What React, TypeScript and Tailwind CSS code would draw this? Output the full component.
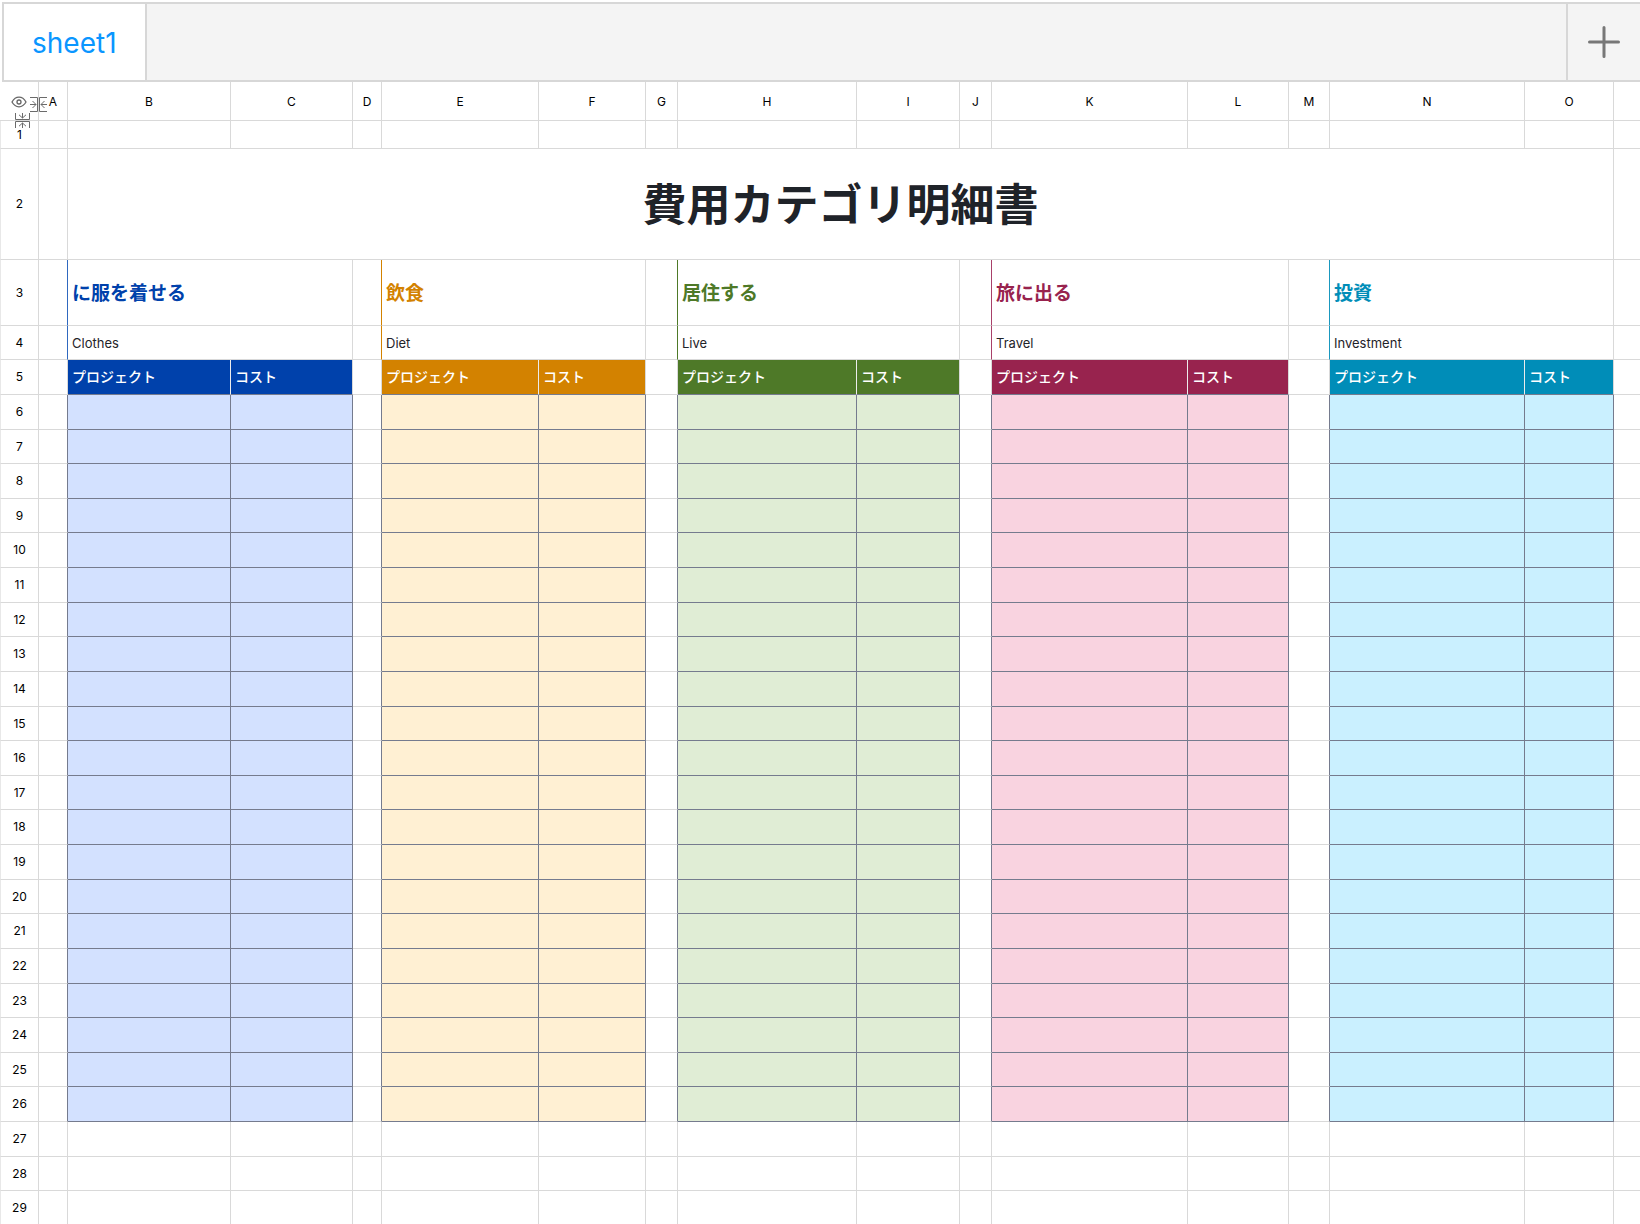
import { Fragment } from "react";

const SECTIONS = [
  {
    title: "に服を着せる",
    subtitle: "Clothes",
    text: "text-[#0041ab]",
    head: "bg-[#0041ab]",
    body: "bg-[#d3e1ff]",
    edge: "border-r-[#2f68bf]",
  },
  {
    title: "飲食",
    subtitle: "Diet",
    text: "text-[#d38200]",
    head: "bg-[#d38200]",
    body: "bg-[#fff0d3]",
    edge: "border-r-[#d38200]",
  },
  {
    title: "居住する",
    subtitle: "Live",
    text: "text-[#4e7928]",
    head: "bg-[#4e7928]",
    body: "bg-[#e0edd5]",
    edge: "border-r-[#4e7928]",
  },
  {
    title: "旅に出る",
    subtitle: "Travel",
    text: "text-[#98234e]",
    head: "bg-[#98234e]",
    body: "bg-[#f9d3e0]",
    edge: "border-r-[#a84069]",
  },
  {
    title: "投資",
    subtitle: "Investment",
    text: "text-[#008db8]",
    head: "bg-[#008db8]",
    body: "bg-[#caf0ff]",
    edge: "border-r-[#1a98bf]",
  },
];

// Row number gutter first, then A..O
const COL_WIDTHS = [39, 29, 163, 122, 29, 157, 107, 32, 179, 103, 32, 196, 101, 41, 195, 89];
const LETTERS = "ABCDEFGHIJKLMNO".split("");

const FIRST_BODY_ROW = 6;
const LAST_BODY_ROW = 26;
const LAST_ROW = 29;
const ROW_STEP = 34.62;

// Rows are a bit under 35px on average, so heights alternate between 34 and 35
function rowHeight(row: number) {
  const i = row - FIRST_BODY_ROW;
  return Math.round((i + 1) * ROW_STEP) - Math.round(i * ROW_STEP);
}

function range(from: number, to: number) {
  return Array.from({ length: to - from + 1 }, (_, i) => from + i);
}

const CELL = "border-r border-b border-[#d9d9d9] p-0";
const HEAD_CELL = "border-r border-b border-b-[#757b8e] bg-clip-padding p-0 pl-1 text-[14px] leading-5 font-medium text-white";

function RowNumber({ row }: { row: number }) {
  return (
    <th scope="row" className="border-x border-b border-[#d9d9d9] border-l-[#e8e8e8] p-0 text-center text-xs font-normal text-black">
      {row}
    </th>
  );
}

function EyeIcon() {
  return (
    <svg width="16" height="12" viewBox="0 0 16 12" fill="none" stroke="#666" strokeWidth="1.3">
      <path d="M1 6C2.8 2.8 5.2 1.2 8 1.2S13.2 2.8 15 6C13.2 9.2 10.8 10.8 8 10.8S2.8 9.2 1 6Z" />
      <circle cx="8" cy="6" r="2" />
    </svg>
  );
}

function CollapseColumnsIcon({ className }: { className?: string }) {
  return (
    <svg className={className} width="17" height="15" viewBox="0 0 17 15" fill="none" stroke="#6b6b6b" strokeWidth="1">
      <path d="M0 .5H7.5V14.5H0M17 .5H9.5V14.5H17" />
      <path d="M0 7.5H6M2.5 4L6 7.5L2.5 11M17 7.5H11M14.5 4L11 7.5L14.5 11" />
    </svg>
  );
}

function CollapseRowsIcon({ className }: { className?: string }) {
  return (
    <svg className={className} width="15" height="15" viewBox="0 0 15 15" fill="none" stroke="#6b6b6b" strokeWidth="1">
      <path d="M.5 0V6.5H14.5V0M.5 15V8.5H14.5V15" />
      <path d="M7.5 0V5M4 1.8L7.5 5L11 1.8M7.5 15V10M4 13.2L7.5 10L11 13.2" />
    </svg>
  );
}

function TabBar() {
  return (
    <div className="mt-0.5 ml-0.5 flex h-20 shrink-0 border-2 border-r-0 border-[#d7d7d7] bg-[#f4f4f4]">
      <button type="button" className="border-r-2 border-[#d7d7d7] bg-white px-7 pt-0.5 text-[28px] leading-9 text-[#0a96ff]">
        sheet1
      </button>
      <div className="flex-1" />
      <button
        type="button"
        aria-label="Add sheet"
        className="flex w-[74px] items-center justify-center border-l-2 border-[#d7d7d7]"
      >
        <svg width="32" height="32" viewBox="0 0 32 32" stroke="#777" strokeWidth="3" strokeLinecap="round">
          <path d="M16 1.5V30.5M1.5 16H30.5" />
        </svg>
      </button>
    </div>
  );
}

export default function App() {
  return (
    <div className="flex h-screen flex-col overflow-hidden bg-white font-['Inter','Noto_Sans_CJK_JP',sans-serif] text-[#1f2329]">
      <TabBar />
      <div className="min-h-0 flex-1 overflow-hidden">
        <table className="w-full table-fixed border-separate border-spacing-0">
          <colgroup>
            {COL_WIDTHS.map((width, i) => (
              <col key={i} style={{ width }} />
            ))}
            <col />
          </colgroup>
          <thead>
            <tr className="h-[39px]">
              <td className={`${CELL} relative`}>
                <div className="flex justify-center pt-0.5">
                  <EyeIcon />
                </div>
                <CollapseColumnsIcon className="absolute top-[15px] left-[30px]" />
                <CollapseRowsIcon className="absolute top-[31px] left-[15px]" />
              </td>
              {LETTERS.map((letter) => (
                <th key={letter} scope="col" className="border-r border-b border-[#d9d9d9] p-0 pt-0.5 text-center text-xs font-normal text-black">
                  {letter}
                </th>
              ))}
              <td className="border-b border-[#d9d9d9]" />
            </tr>
          </thead>
          <tbody>
            <tr className="h-7">
              <RowNumber row={1} />
              {LETTERS.map((letter) => (
                <td key={letter} className={CELL} />
              ))}
              <td className="border-b border-[#d9d9d9]" />
            </tr>
            <tr className="h-[111px]">
              <RowNumber row={2} />
              <td className={CELL} />
              <td colSpan={14} className="border-r border-b border-[#d9d9d9] p-0 pt-0.5 text-center text-[44px] leading-none font-bold">
                費用カテゴリ明細書
              </td>
              <td className="border-b border-[#d9d9d9]" />
            </tr>
            <tr className="h-[66px]">
              <RowNumber row={3} />
              {SECTIONS.map((s) => (
                <Fragment key={s.title}>
                  <td className={`${CELL} ${s.edge}`} />
                  <td colSpan={2} className={`border-r border-b border-[#d9d9d9] p-0 pt-0.5 pl-1 text-[19px] leading-6 font-bold ${s.text}`}>
                    {s.title}
                  </td>
                </Fragment>
              ))}
              <td className="border-b border-[#d9d9d9]" />
            </tr>
            <tr className="h-[34px]">
              <RowNumber row={4} />
              {SECTIONS.map((s) => (
                <Fragment key={s.title}>
                  <td className={`${CELL} ${s.edge}`} />
                  <td colSpan={2} className="border-r border-b border-[#d9d9d9] p-0 pl-1 text-[13px] leading-5">
                    {s.subtitle}
                  </td>
                </Fragment>
              ))}
              <td className="border-b border-[#d9d9d9]" />
            </tr>
            <tr className="h-[35px]">
              <RowNumber row={5} />
              {SECTIONS.map((s) => (
                <Fragment key={s.title}>
                  <td className={CELL} />
                  <td className={`${HEAD_CELL} border-r-[#ececec] ${s.head}`}>プロジェクト</td>
                  <td className={`${HEAD_CELL} border-r-[#d9d9d9] ${s.head}`}>コスト</td>
                </Fragment>
              ))}
              <td className="border-b border-[#d9d9d9]" />
            </tr>
            {range(FIRST_BODY_ROW, LAST_BODY_ROW).map((row) => (
              <tr key={row} style={{ height: rowHeight(row) }}>
                <RowNumber row={row} />
                {SECTIONS.map((s) => (
                  <Fragment key={s.title}>
                    <td className="border-r border-b border-r-[#757b8e] border-b-[#d9d9d9] p-0" />
                    <td className={`border-r border-b border-[#757b8e] p-0 ${s.body}`} />
                    <td className={`border-r border-b border-[#757b8e] p-0 ${s.body}`} />
                  </Fragment>
                ))}
                <td className="border-b border-[#d9d9d9]" />
              </tr>
            ))}
            {range(LAST_BODY_ROW + 1, LAST_ROW).map((row) => (
              <tr key={row} style={{ height: rowHeight(row) }}>
                <RowNumber row={row} />
                {LETTERS.map((letter) => (
                  <td key={letter} className={CELL} />
                ))}
                <td className="border-b border-[#d9d9d9]" />
              </tr>
            ))}
          </tbody>
        </table>
      </div>
    </div>
  );
}
